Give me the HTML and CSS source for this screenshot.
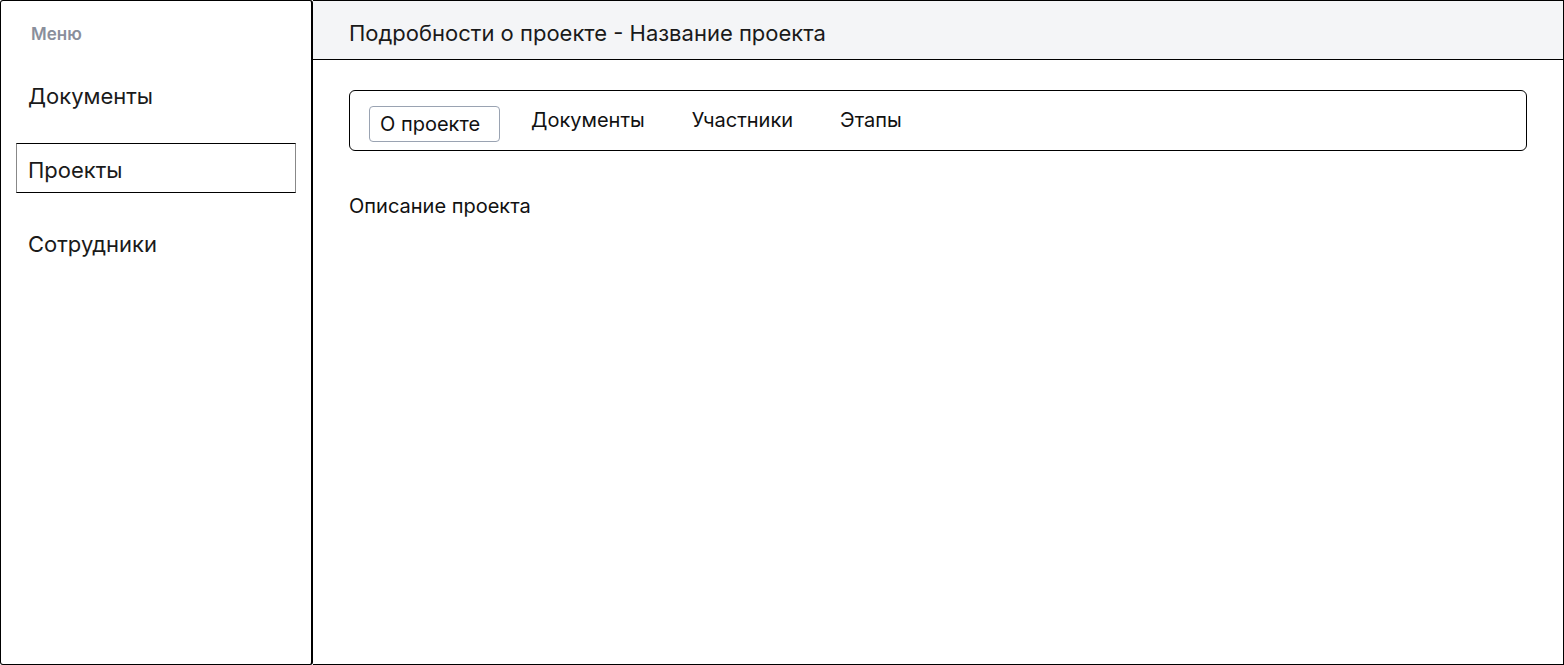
FILE: index.html
```html
<!DOCTYPE html>
<html lang="ru">
<head>
<meta charset="utf-8">
<title>Подробности о проекте</title>
<link rel="stylesheet" href="styles.css">
</head>
<body>
<div class="app">
  <aside class="sidebar">
    <div class="menu-label">Меню</div>
    <nav class="menu">
      <div class="menu-item">Документы</div>
      <div class="menu-item active">Проекты</div>
      <div class="menu-item">Сотрудники</div>
    </nav>
  </aside>
  <main class="main">
    <header class="header">Подробности о проекте - Название проекта</header>
    <section class="content">
      <div class="tabs">
        <div class="tab active">О проекте</div>
        <div class="tab">Документы</div>
        <div class="tab">Участники</div>
        <div class="tab">Этапы</div>
      </div>
      <p class="description">Описание проекта</p>
    </section>
  </main>
</div>
</body>
</html>
```

FILE: styles.css
```css
* { box-sizing: border-box; }
html, body { margin: 0; padding: 0; background: #fff; }
body {
  font-family: Inter, "Noto Sans", "Liberation Sans", sans-serif;
  color: #111;
}
.app {
  display: flex;
  width: 1564px;
  height: 665px;
}
.sidebar {
  width: 313px;
  flex: 0 0 313px;
  height: 665px;
  border: 1px solid #000;
  border-right-width: 2px;
  border-radius: 3px;
  padding: 23px 15px 0 15px;
  display: flex;
  flex-direction: column;
}
.menu-label {
  font-size: 17px;
  line-height: 20px;
  font-weight: 600;
  color: #8a8f9c;
  padding-left: 15px;
  margin-bottom: 25px;
}
.menu {
  display: flex;
  flex-direction: column;
  gap: 24px;
}
.menu-item {
  height: 50px;
  border: 1px solid transparent;
  padding: 0 11px;
  font-size: 22px;
  line-height: 52px;
  color: #1a1a1a;
}
.menu-item.active {
  border-color: #000;
  border-right-color: #888;
  border-left-color: #888;
}
.main {
  flex: 1;
  height: 665px;
  border: 1px solid #000;
  border-left: none;
  display: flex;
  flex-direction: column;
}
.header {
  height: 59px;
  flex: 0 0 59px;
  background: #f4f5f7;
  border-bottom: 1px solid #000;
  padding: 17px 0 0 36px;
  font-size: 22px;
  line-height: 30px;
  color: #1a1a1a;
}
.content {
  padding: 30px 36px 0 36px;
}
.tabs {
  height: 61px;
  border: 1px solid #000;
  border-radius: 6px;
  padding: 15px 19px;
  display: flex;
  align-items: flex-start;
  gap: 15px;
}
.tab {
  padding: 0 16px;
  font-size: 20px;
  line-height: 28px;
  color: #111;
}
.tab.active {
  height: 36px;
  padding: 0 19px 0 10px;
  border: 1px solid #9aa3b2;
  border-radius: 4px;
  line-height: 34px;
}
.description {
  margin: 43px 0 0 0;
  font-size: 20px;
  line-height: 24px;
  color: #111;
}
```
